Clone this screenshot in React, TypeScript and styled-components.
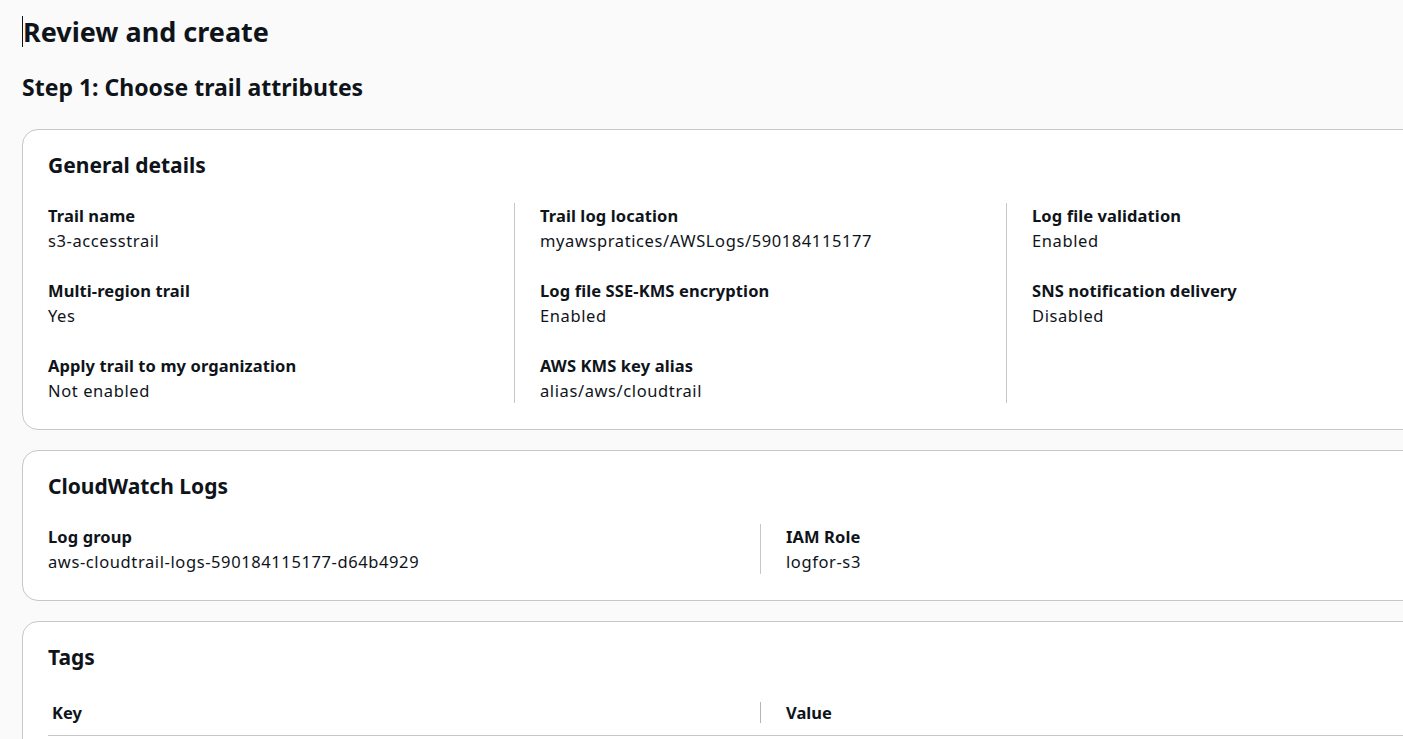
import React from 'react';
import styled, { createGlobalStyle } from 'styled-components';

const GlobalStyle = createGlobalStyle`
    html, body {
        margin: 0;
        padding: 0;
        overflow: hidden;
        background: #fafafa;
    }
    body {
        font-family: 'Noto Sans', 'Open Sans', sans-serif;
        color: #0f141a;
    }
`;

const Page = styled.div`
    padding: 16px 0 0 22px;
    width: 1560px;
`;

const Title = styled.h1`
    display: flex;
    align-items: center;
    margin: 0;
    font-size: 27px;
    line-height: 31px;
    font-weight: 700;
`;

const Caret = styled.span`
    display: inline-block;
    width: 1px;
    height: 31px;
    background: #0f141a;
`;

const StepTitle = styled.h2`
    margin: 25px 0 0;
    font-size: 23px;
    line-height: 30px;
    font-weight: 700;
`;

const Card = styled.section<{ $gap?: number }>`
    box-sizing: border-box;
    width: 1530px;
    margin-top: ${(p) => p.$gap ?? 20}px;
    padding: 21px 25px 26px;
    background: #fff;
    border: 1px solid #c6c6cd;
    border-radius: 16px;
`;

const CardTitle = styled.h3`
    margin: 0 0 24px;
    font-size: 21px;
    line-height: 28px;
    font-weight: 700;
`;

const Columns = styled.div<{ $count: number; $width: number }>`
    display: grid;
    grid-template-columns: repeat(${(p) => p.$count}, ${(p) => p.$width}px);
    margin-left: -26px;
`;

const Column = styled.div<{ $first?: boolean }>`
    display: flex;
    flex-direction: column;
    gap: 25px;
    padding-left: 25px;
    border-left: 1px solid ${(p) => (p.$first ? 'transparent' : '#c6c6cd')};
`;

const Pair = styled.div`
    font-size: 16.5px;
    line-height: 25px;
`;

const Label = styled.div`
    font-weight: 700;
    letter-spacing: 0.1px;
`;

const Value = styled.div`
    font-weight: 400;
    letter-spacing: 0.6px;
`;

const TableHead = styled.div`
    display: grid;
    grid-template-columns: 712px 738px;
    border-bottom: 1px solid #c6c6cd;
    padding: 7px 0 12px;
`;

const HeadCell = styled.div<{ $first?: boolean }>`
    font-size: 16.5px;
    line-height: 21px;
    font-weight: 700;
    padding-left: ${(p) => (p.$first ? 3 : 25)}px;
    border-left: 1px solid ${(p) => (p.$first ? 'transparent' : '#b4b4bb')};
`;

type Item = [string, string];

const general: Item[][] = [
    [
        ['Trail name', 's3-accesstrail'],
        ['Multi-region trail', 'Yes'],
        ['Apply trail to my organization', 'Not enabled'],
    ],
    [
        ['Trail log location', 'myawspratices/AWSLogs/590184115177'],
        ['Log file SSE-KMS encryption', 'Enabled'],
        ['AWS KMS key alias', 'alias/aws/cloudtrail'],
    ],
    [
        ['Log file validation', 'Enabled'],
        ['SNS notification delivery', 'Disabled'],
    ],
];

const cloudwatch: Item[][] = [
    [['Log group', 'aws-cloudtrail-logs-590184115177-d64b4929']],
    [['IAM Role', 'logfor-s3']],
];

const KeyValues = ({ data, width }: { data: Item[][]; width: number }) => (
    <Columns $count={data.length} $width={width}>
        {data.map((col, i) => (
            <Column key={i} $first={i === 0}>
                {col.map(([label, value]) => (
                    <Pair key={label}>
                        <Label>{label}</Label>
                        <Value>{value}</Value>
                    </Pair>
                ))}
            </Column>
        ))}
    </Columns>
);

const App = () => {
    return (
        <>
            <GlobalStyle />
            <Page>
                <Title>
                    <Caret />
                    Review and create
                </Title>
                <StepTitle>Step 1: Choose trail attributes</StepTitle>

                <Card $gap={27}>
                    <CardTitle>General details</CardTitle>
                    <KeyValues data={general} width={492} />
                </Card>

                <Card>
                    <CardTitle>CloudWatch Logs</CardTitle>
                    <KeyValues data={cloudwatch} width={738} />
                </Card>

                <Card>
                    <CardTitle>Tags</CardTitle>
                    <TableHead>
                        <HeadCell $first>Key</HeadCell>
                        <HeadCell>Value</HeadCell>
                    </TableHead>
                </Card>
            </Page>
        </>
    );
};

export default App;
